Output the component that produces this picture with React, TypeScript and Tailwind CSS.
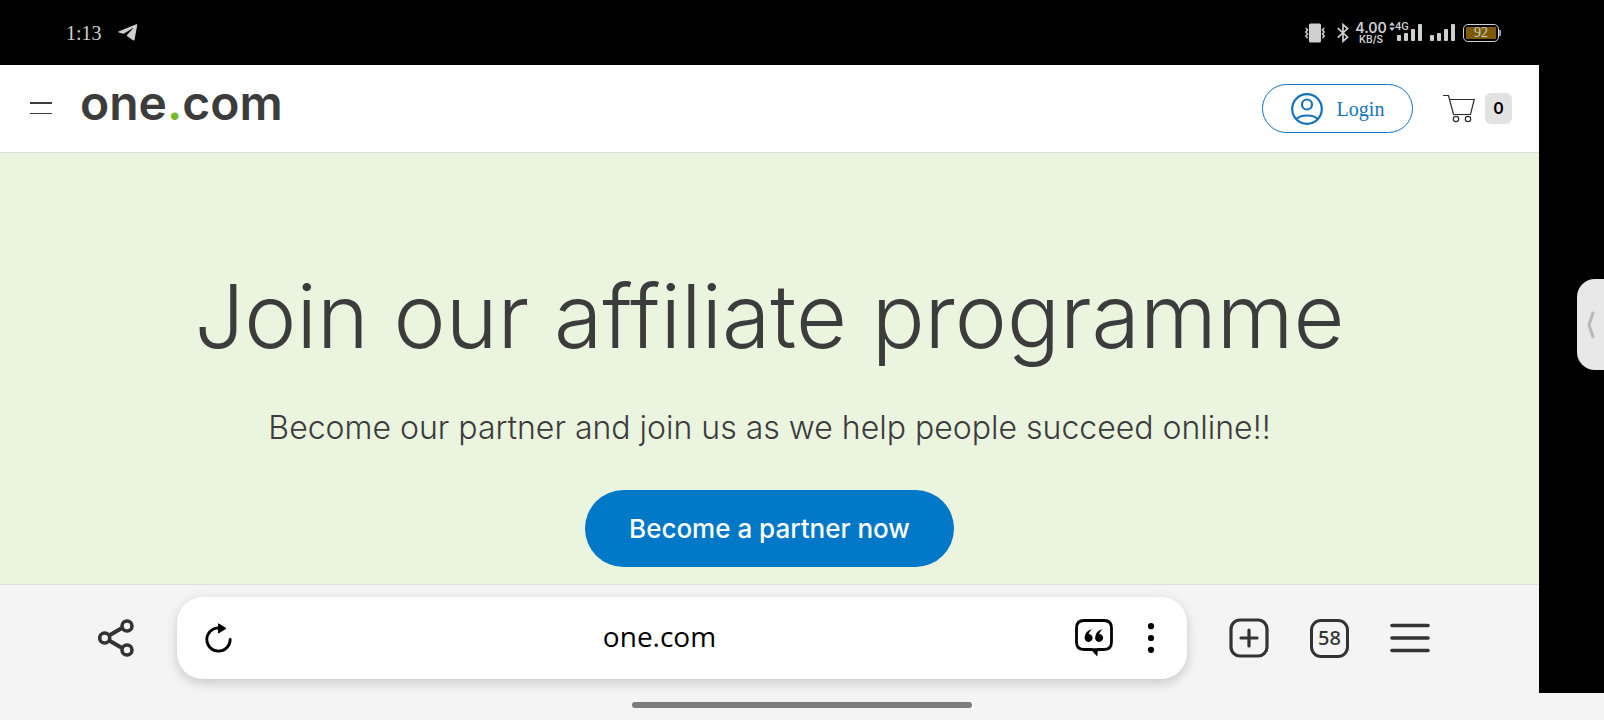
import type { ReactNode } from 'react'

type IconButtonProps = {
  label: string
  children: ReactNode
}

const IconButton = ({ label, children }: IconButtonProps) => (
  <button type="button" aria-label={label} className="flex shrink-0 items-center justify-center">
    {children}
  </button>
)

const SignalBars = () => (
  <svg width="25" height="18" viewBox="0 0 25 18" fill="#cfcfcf">
    <rect x="0" y="11" width="4" height="6" rx="1" />
    <rect x="7" y="9" width="4" height="8" rx="1" />
    <rect x="14" y="5" width="4" height="12" rx="1" />
    <rect x="21" y="0" width="4" height="17" rx="1" />
  </svg>
)

const StatusBar = () => (
  <div className="flex h-[65px] items-center justify-between bg-black pr-[103px] pl-[66px] text-[#cfcfcf]">
    <div className="flex items-center gap-4">
      <span className="font-['Liberation_Serif',serif] text-xl">1:13</span>
      <svg width="20" height="17" viewBox="0 0 20 17" fill="#cfcfcf">
        <path d="M0.5 7.6 L18.3 0.3 Q19.5 0 19.2 1.3 L16.6 15.6 Q16.3 17 15 16.3 L9.2 12.2 Q8.4 11.5 9.2 10.7 L15 4.6 Q15.4 4 14.6 4.3 L6.6 9.3 Q5.6 9.9 4.4 9.5 L0.8 8.5 Q-0.2 8.1 0.5 7.6Z" />
      </svg>
    </div>
    <div className="flex items-center">
      <svg width="20" height="20" viewBox="0 0 20 20" className="mr-3">
        <rect x="4" y="0.5" width="12" height="19" rx="1.5" fill="#cfcfcf" />
        <path d="M0.8 5 L2.6 7 L0.8 9 L2.6 11 L0.8 13 L2.6 15 M19.2 5 L17.4 7 L19.2 9 L17.4 11 L19.2 13 L17.4 15" fill="none" stroke="#cfcfcf" strokeWidth="1.5" />
      </svg>
      <svg width="12" height="20" viewBox="0 0 12 20" className="mr-1.5" fill="none" stroke="#cfcfcf" strokeWidth="1.7">
        <path d="M0.8 5.2 L10.6 14.2 L6 18.2 V1.6 L10.6 5.6 L0.8 14.6" />
      </svg>
      <span className="mr-0.5 flex w-8 flex-col items-center font-['Inter',sans-serif] font-semibold">
        <span className="text-sm leading-3">4.00</span>
        <span className="text-[10px] leading-[10px]">KB/S</span>
      </span>
      <svg width="6" height="9" viewBox="0 0 5 8" className="mr-0.5 mb-3" fill="#cfcfcf">
        <path d="M0 3.2 L2.5 0 L5 3.2Z M0 4.8 L2.5 8 L5 4.8Z" />
      </svg>
      <span className="relative mr-2 block">
        <SignalBars />
        <span className="absolute -top-0.5 -left-0.5 bg-black font-['Roboto',sans-serif] text-[11px] leading-[10px] font-medium">4G</span>
      </span>
      <span className="mr-2">
        <SignalBars />
      </span>
      <span className="flex h-[18px] w-9 rounded-[5px] border border-[#cfcfcf] p-0.5">
        <span className="flex flex-1 items-center justify-center bg-[#7d5a08] font-['Liberation_Serif',serif] text-sm leading-3">92</span>
      </span>
      <span className="h-1.5 w-0.5 bg-[#9a9a9a]" />
    </div>
  </div>
)

const SiteHeader = () => (
  <header className="flex h-[88px] shrink-0 items-center justify-between border-b border-[#dde1da] bg-white pr-[27px] pl-[30px]">
    <div className="flex items-center gap-7">
      <IconButton label="Menu">
        <span className="flex w-[22px] flex-col gap-[9px] pb-0.5">
          <span className="h-0.5 bg-[#3c3c3c]" />
          <span className="h-px bg-[#3c3c3c]" />
        </span>
      </IconButton>
      <a href="#" className="pb-3 font-['Inter',sans-serif] text-5xl leading-none font-semibold text-[#3c3c3c]">
        one<span className="text-[#76b82a]">.</span>com
      </a>
    </div>
    <div className="flex items-center">
      <a href="#" className="mr-[30px] flex h-[49px] w-[151px] items-center justify-center gap-3.5 rounded-full border border-[#1173bb] font-['Liberation_Serif',serif] text-xl text-[#1173bb]">
        <svg width="32" height="32" viewBox="0 0 32 32" fill="none" stroke="#1173bb" strokeWidth="2.2">
          <circle cx="16" cy="16" r="14.8" />
          <circle cx="16" cy="11.5" r="5" />
          <path d="M5.5 26 Q8.5 22.5 16 22.5 T26.5 26" />
        </svg>
        Login
      </a>
      <a href="#" aria-label="Cart" className="flex items-center gap-2.5">
        <svg width="32" height="29" viewBox="0 0 32 29" fill="none" stroke="#2b2b2b" strokeWidth="1.2">
          <path d="M0 1.5 H5.5 L10.5 20.5 H27.5 L31.2 5.5 H6.5" />
          <circle cx="13" cy="25" r="2.7" />
          <circle cx="25" cy="25" r="2.7" />
        </svg>
        <span className="flex h-[31px] w-[27px] items-center justify-center rounded-md bg-[#e2e2e2] pb-0.5 font-['Inter',sans-serif] text-base font-semibold text-black">
          0
        </span>
      </a>
    </div>
  </header>
)

const Hero = () => (
  <main className="flex flex-1 flex-col items-center bg-[#eaf4df] px-10 pt-[115px] pb-4 text-center font-['Inter',sans-serif] text-[#3c3c3c]">
    <h1 className="text-[88px] leading-[96px] font-light">Join our affiliate programme</h1>
    <p className="mt-11 text-[32px] leading-10 font-light">
      Become our partner and join us as we help people succeed online!!
    </p>
    <button type="button" className="mt-[42px] h-[77px] w-[369px] rounded-full bg-[#0078c8] text-[26px] font-medium text-white">
      Become a partner now
    </button>
  </main>
)

const BrowserBar = () => (
  <nav className="flex h-[109px] shrink-0 items-center border-t border-[#dfe2dc] bg-[#f4f4f4] pr-[109px] pb-0.5 pl-[98px]">
    <IconButton label="Share">
      <svg width="36" height="38" viewBox="0 0 36 38" fill="none" stroke="#333333" strokeWidth="3.6">
        <path d="M12 16 L23.5 9.2 M12 22 L23.5 28.8" strokeWidth="4" />
        <circle cx="6.7" cy="19" r="5" />
        <circle cx="29" cy="7" r="5" />
        <circle cx="29" cy="31" r="5" />
      </svg>
    </IconButton>
    <div className="mr-[42px] ml-[43px] flex h-[82px] flex-1 items-center rounded-[26px] bg-white pr-8 pl-7 shadow-[0_4px_12px_rgba(0,0,0,0.18)]">
      <IconButton label="Reload">
        <svg width="27" height="30" viewBox="0 0 27 30" fill="none">
          <path d="M13.5 4.8 A11.7 11.7 0 1 0 25.2 16.5" stroke="#000" strokeWidth="2.8" strokeLinecap="round" />
          <path d="M13.5 0.8 L21 5.4 L13.5 10Z" fill="#000" stroke="#000" strokeLinejoin="round" />
        </svg>
      </IconButton>
      <input
        type="text"
        aria-label="Address"
        defaultValue="one.com"
        className="ml-3 h-12 min-w-0 flex-1 bg-transparent pb-1 text-center font-['Open_Sans',sans-serif] text-[28px] text-black outline-none"
      />
      <IconButton label="Reader mode">
        <svg width="38" height="38" viewBox="0 0 38 38">
          <path d="M17 30.5 H9 Q1.5 30.5 1.5 23 V9 Q1.5 1.5 9 1.5 H29 Q36.5 1.5 36.5 9 V23 Q36.5 30.5 29 30.5 H22" fill="none" stroke="#000" strokeWidth="2.8" />
          <path d="M14.5 29.2 H23 L22.3 37.5Z" fill="#000" />
          <path d="M17.3 10.2 Q10 11.5 9.6 18.5 A4 4 0 1 0 13.6 14.9 Q14 12.2 17.3 10.2Z M27.8 10.2 Q20.5 11.5 20.1 18.5 A4 4 0 1 0 24.1 14.9 Q24.5 12.2 27.8 10.2Z" fill="#000" />
        </svg>
      </IconButton>
      <span className="w-[34px]" />
      <IconButton label="Page options">
        <svg width="8" height="30" viewBox="0 0 8 30" fill="#000">
          <circle cx="4" cy="3.2" r="3.1" />
          <circle cx="4" cy="15" r="3.1" />
          <circle cx="4" cy="26.8" r="3.1" />
        </svg>
      </IconButton>
    </div>
    <div className="flex items-center gap-[41px] text-[#333333]">
      <IconButton label="New tab">
        <svg width="40" height="40" viewBox="0 0 40 40" fill="none" stroke="#333333" strokeWidth="3.2" strokeLinecap="round">
          <rect x="2" y="2" width="36" height="36" rx="9" />
          <path d="M20 12 V28 M12 20 H28" />
        </svg>
      </IconButton>
      <button
        type="button"
        aria-label="58 open tabs"
        className="flex size-[39px] items-center justify-center rounded-[11px] border-3 border-[#333333] font-['Noto_Sans',sans-serif] text-xl leading-none font-medium"
      >
        58
      </button>
      <IconButton label="Browser menu">
        <svg width="40" height="30" viewBox="0 0 40 30" stroke="#333333" strokeWidth="3.6" strokeLinecap="round">
          <path d="M2 2.5 H38 M2 15 H38 M2 27.5 H38" />
        </svg>
      </IconButton>
    </div>
  </nav>
)

const App = () => {
  return (
    <div className="flex min-h-screen flex-col bg-[#f4f4f4]">
      <StatusBar />
      <div className="flex flex-1">
        <div className="flex min-w-0 flex-1 flex-col">
          <SiteHeader />
          <Hero />
          <BrowserBar />
        </div>
        {/* Cutout side of the phone, with the edge panel handle */}
        <aside className="flex w-[65px] shrink-0 justify-end bg-black pt-[214px]">
          <button type="button" aria-label="Open edge panel" className="flex h-[91px] w-[27px] items-center justify-center rounded-l-[18px] bg-[#e8e8e8]">
            <svg width="8" height="28" viewBox="0 0 8 28" fill="none" stroke="#b8b8b8" strokeWidth="3" strokeLinecap="round" strokeLinejoin="round">
              <path d="M6 2 L2 14 L6 26" />
            </svg>
          </button>
        </aside>
      </div>
      <div className="flex h-[27px] justify-center pt-[9px]">
        <span className="h-1.5 w-[340px] rounded-full bg-[#7c7c7c]" />
      </div>
    </div>
  )
}

export default App
